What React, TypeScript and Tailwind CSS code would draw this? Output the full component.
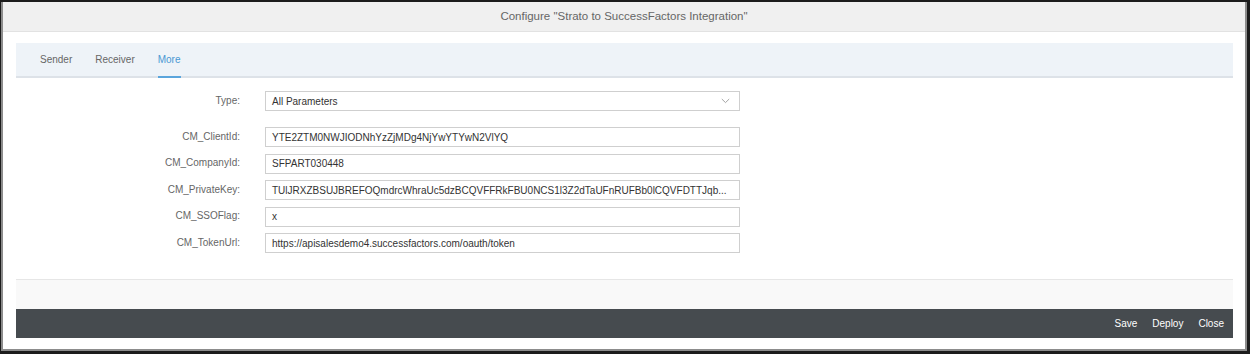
import React from "react";

const rows: [string, string][] = [
  ["CM_ClientId:", "YTE2ZTM0NWJIODNhYzZjMDg4NjYwYTYwN2VlYQ"],
  ["CM_CompanyId:", "SFPART030448"],
  [
    "CM_PrivateKey:",
    "TUlJRXZBSUJBREFOQmdrcWhraUc5dzBCQVFFRkFBU0NCS1l3Z2dTaUFnRUFBb0lCQVFDTTJqb...",
  ],
  ["CM_SSOFlag:", "x"],
  ["CM_TokenUrl:", "https://apisalesdemo4.successfactors.com/oauth/token"],
];

export default function App() {
  return (
    <div
      className="w-[1250px] h-[354px] bg-[#1c1c1c] pt-[2px] pl-[1px] pr-[3px] pb-[3px] overflow-hidden"
      style={{ fontFamily: '"Liberation Sans", Arial, sans-serif' }}
    >
      <div className="h-full bg-white border-l-2 border-r-2 border-b-2 border-[#8c8c8c] flex flex-col">
        {/* Header */}
        <div className="h-[30px] shrink-0 bg-[#f0f0f0] border-b border-[#e2e2e2] flex items-center justify-center">
          <span className="text-[11.5px] text-[#666666]">
            Configure "Strato to SuccessFactors Integration"
          </span>
        </div>

        <div className="flex-1 flex flex-col pl-[13px] pr-[12px] pt-[11px] pb-[11px]">
          {/* Tabs */}
          <div className="h-[35px] shrink-0 bg-[#eef3f8] border-b-2 border-[#dde2e8] flex items-stretch pl-[24px] gap-[23px] text-[10px]">
            <div className="flex items-center text-[#666666]">Sender</div>
            <div className="flex items-center text-[#666666]">Receiver</div>
            <div className="relative flex items-center text-[#4a98d3]">
              More
              <div className="absolute left-0 right-0 -bottom-[2px] h-[2px] bg-[#5aa5dc]" />
            </div>
          </div>

          {/* Form */}
          <div className="pt-[13px] text-[10px]">
            <div className="grid grid-cols-[224px_475px] gap-x-[25px] items-center">
              <div className="text-right text-[#666666] leading-[12px] pb-[1px]">Type:</div>
              <div className="h-[20px] border border-[#cfcfcf] bg-white flex items-center justify-between pl-[6px] pr-[9px] text-[#333333]">
                <span>All Parameters</span>
                <svg width="9" height="6" viewBox="0 0 9 6" fill="none">
                  <path d="M0.8 1 L4.5 4.6 L8.2 1" stroke="#9a9a9a" strokeWidth="0.9" />
                </svg>
              </div>
            </div>
            <div className="mt-[16px] flex flex-col gap-[6.5px]">
              {rows.map(([label, value]) => (
                <div
                  key={label}
                  className="grid grid-cols-[224px_475px] gap-x-[25px] items-center"
                >
                  <div className="text-right text-[#666666] leading-[12px] pb-[1px]">{label}</div>
                  <div className="h-[20px] border border-[#cfcfcf] bg-white flex items-center pl-[6px] pr-[6px] text-[#333333]">
                    <span className="whitespace-nowrap">{value}</span>
                  </div>
                </div>
              ))}
            </div>
          </div>

          <div className="flex-1" />

          {/* Footer */}
          <div className="h-[30px] shrink-0 bg-[#f9f9f9] border-t border-[#e6e6e6]" />
          <div className="h-[29px] shrink-0 bg-[#464b4f] flex items-center justify-end gap-[15px] pr-[9px] text-[10px] text-white">
            <span>Save</span>
            <span>Deploy</span>
            <span>Close</span>
          </div>
        </div>
      </div>
    </div>
  );
}
